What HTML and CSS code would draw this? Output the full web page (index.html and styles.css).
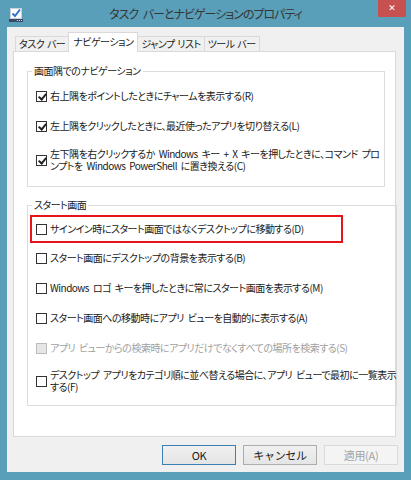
FILE: index.html
```html
<!DOCTYPE html>
<html lang="ja">
<head>
  <meta charset="UTF-8" />
  <meta name="viewport" content="width=device-width, initial-scale=1.0"/>
  <title>タスク バーとナビゲーションのプロパティ</title>
  <link rel="stylesheet" href="styles.css">
</head>
<body>
  <div class="window">
    <div class="titlebar">
      <svg class="app-icon" width="14" height="14" viewBox="0 0 14 14">
        <rect x="1.5" y="0.5" width="11" height="10" fill="#fff" stroke="#c9d3dc"/>
        <path d="M3.5 5.5 L6 8 L11 1.5" fill="none" stroke="#2f73d0" stroke-width="2"/>
        <rect x="0" y="11" width="14" height="3" fill="#3a4a66"/>
        <rect x="8" y="12" width="1" height="1" fill="#cfd8e6"/>
        <rect x="10" y="12" width="1" height="1" fill="#cfd8e6"/>
        <rect x="12" y="12" width="1" height="1" fill="#cfd8e6"/>
      </svg>
      <div class="title">タスク バーとナビゲーションのプロパティ</div>
      <div class="close">✕</div>
    </div>

    <div class="client">
      <div class="tabs">
        <div class="tab">タスク バー</div>
        <div class="tab active">ナビゲーション</div>
        <div class="tab">ジャンプ リスト</div>
        <div class="tab">ツール バー</div>
      </div>

      <div class="panel">
        <fieldset class="group first">
          <legend>画面隅でのナビゲーション</legend>
          <div class="opt"><span class="box checked"></span><span class="label">右上隅をポイントしたときにチャームを表示する(R)</span></div>
          <div class="opt"><span class="box checked"></span><span class="label">左上隅をクリックしたときに、最近使ったアプリを切り替える(L)</span></div>
          <div class="opt two"><span class="box checked"></span><span class="label">左下隅を右クリックするか Windows キー + X キーを押したときに、コマンド プロ<br>ンプトを Windows PowerShell に置き換える(C)</span></div>
        </fieldset>

        <fieldset class="group second">
          <legend>スタート画面</legend>
          <div class="highlight">
            <div class="opt"><span class="box"></span><span class="label">サインイン時にスタート画面ではなくデスクトップに移動する(D)</span></div>
          </div>
          <div class="opt"><span class="box"></span><span class="label">スタート画面にデスクトップの背景を表示する(B)</span></div>
          <div class="opt"><span class="box"></span><span class="label">Windows ロゴ キーを押したときに常にスタート画面を表示する(M)</span></div>
          <div class="opt"><span class="box"></span><span class="label">スタート画面への移動時にアプリ ビューを自動的に表示する(A)</span></div>
          <div class="opt disabled"><span class="box"></span><span class="label">アプリ ビューからの検索時にアプリだけでなくすべての場所を検索する(S)</span></div>
          <div class="opt two"><span class="box"></span><span class="label">デスクトップ アプリをカテゴリ順に並べ替える場合に、アプリ ビューで最初に一覧表示<br>する(F)</span></div>
        </fieldset>
      </div>

      <div class="buttons">
        <button class="btn default">OK</button>
        <button class="btn">キャンセル</button>
        <button class="btn" disabled>適用(A)</button>
      </div>
    </div>
  </div>
</body>
</html>
```

FILE: styles.css
```css
body {
  margin: 0;
  font-family: "Noto Sans CJK JP", "Noto Sans", sans-serif;
  font-feature-settings: "palt";
  font-size: 10px;
  letter-spacing: -0.5px;
  word-spacing: 2px;
  color: #1a1a1a;
}

.window {
  width: 411px;
  height: 480px;
  background-color: #599fba;
  display: flex;
  flex-direction: column;
}

/* title bar */
.titlebar {
  height: 27px;
  flex: none;
  display: grid;
  grid-template-columns: 1fr auto 1fr;
}

.app-icon {
  align-self: start;
  margin: 8px 0 0 9px;
}

.title {
  align-self: center;
  font-size: 12px;
  letter-spacing: -1px;
  word-spacing: 3px;
  color: #363636;
  line-height: 16px;
  margin-top: 1px;
}

.close {
  justify-self: end;
  width: 28px;
  height: 17px;
  margin-right: 5px;
  background-color: #c75050;
  color: #fff;
  font-family: "DejaVu Sans", sans-serif;
  font-size: 9px;
  font-weight: bold;
  letter-spacing: 0;
  line-height: 17px;
  text-align: center;
}

/* dialog body */
.client {
  flex: 1;
  margin: 0 7px 8px;
  background-color: #f0f0f0;
  padding: 6px 6px 7px 6px;
  display: flex;
  flex-direction: column;
}

.tabs {
  display: flex;
  align-items: flex-end;
  height: 18px;
  margin-left: 2px;
  word-spacing: 1px;
}

.tab {
  height: 14px;
  line-height: 14px;
  padding: 0 3px;
  border: 1px solid #d9d9d9;
  border-bottom: none;
  background-color: #f0f0f0;
  margin-right: -1px;
  white-space: nowrap;
}

.tab.active {
  height: 19px;
  line-height: 17px;
  background-color: #fff;
  position: relative;
  z-index: 1;
  margin-bottom: -1px;
  padding: 0 4px;
}

.panel {
  flex: 1;
  background-color: #fff;
  border: 1px solid #d9d9d9;
  margin-right: 2px;
  padding: 12px 10px 0 13px;
}

.group {
  margin: 0;
  border: 1px solid #dcdcdc;
  padding: 12px 0 14px 8px;
  display: flex;
  flex-direction: column;
  gap: 18px;
}

.group legend {
  margin-left: -4px;
  padding: 0 2px;
  line-height: 14px;
}

.group.second {
  margin-top: 11px;
  padding-top: 3px;
  padding-bottom: 12px;
}

.opt {
  display: flex;
  align-items: center;
  gap: 3px;
  line-height: 12px;
  white-space: nowrap;
}

.opt.two {
  margin-top: -2px;
}

.group.second .opt.two {
  margin-top: -3px;
}

.box {
  width: 11px;
  height: 11px;
  box-sizing: border-box;
  border: 1px solid #333;
  background-color: #fff;
  flex: none;
  position: relative;
}

.box.checked::after {
  content: "";
  position: absolute;
  left: 3px;
  top: 0px;
  width: 3px;
  height: 6px;
  border: solid #222;
  border-width: 0 2px 2px 0;
  transform: rotate(40deg);
}

.opt.disabled {
  color: #a0a0a0;
}

.opt.disabled .box {
  border-color: #bcbcbc;
  background-color: #e6e6e6;
}

.highlight {
  margin-left: -6px;
  margin-bottom: -9px;
  width: 313px;
  height: 28px;
  box-sizing: border-box;
  border: 2px solid #e8141b;
  padding-left: 4px;
  display: flex;
  align-items: center;
}

/* buttons */
.buttons {
  display: flex;
  justify-content: flex-end;
  gap: 7px;
  margin-top: 8px;
}

.btn {
  width: 74px;
  height: 20px;
  padding: 0;
  font-family: inherit;
  font-size: 11px;
  letter-spacing: -0.3px;
  color: #1a1a1a;
  border: 1px solid #adadad;
  background: linear-gradient(#f0f0f0, #e5e5e5);
}

.btn.default {
  border-color: #3c7fb1;
}

.btn:disabled {
  border-color: #d9d9d9;
  background: #f4f4f4;
  color: #a3a3a3;
}
```
